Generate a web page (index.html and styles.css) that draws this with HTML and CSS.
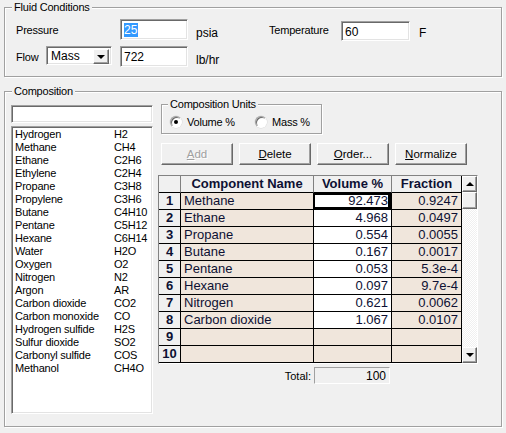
FILE: index.html
```html
<!DOCTYPE html>
<html lang="en">
  <head>
    <meta charset="UTF-8" />
    <title>Fluid Conditions</title>
    <link rel="stylesheet" href="styles.css">
  </head>
  <body>
    <fieldset class="group fluid">
      <legend>Fluid Conditions</legend>
      <div class="row">
        <span class="lbl w-pressure">Pressure</span>
        <div class="field pressure"><span class="selected">25</span></div>
        <span class="unit w-psia">psia</span>
        <span class="lbl w-temp">Temperature</span>
        <div class="field temp">60</div>
        <span class="unit f-unit">F</span>
      </div>
      <div class="row row2">
        <span class="lbl w-flow">Flow</span>
        <div class="combo">
          <span class="combo-text">Mass</span>
          <span class="combo-btn"><i class="arrow-down"></i></span>
        </div>
        <div class="field flow">722</div>
        <span class="unit">lb/hr</span>
      </div>
    </fieldset>

    <fieldset class="group comp">
      <legend>Composition</legend>
      <div class="comp-body">
        <div class="left">
          <div class="field search"></div>
          <ul class="list">
            <li><span>Hydrogen</span>H2</li>
            <li><span>Methane</span>CH4</li>
            <li><span>Ethane</span>C2H6</li>
            <li><span>Ethylene</span>C2H4</li>
            <li><span>Propane</span>C3H8</li>
            <li><span>Propylene</span>C3H6</li>
            <li><span>Butane</span>C4H10</li>
            <li><span>Pentane</span>C5H12</li>
            <li><span>Hexane</span>C6H14</li>
            <li><span>Water</span>H2O</li>
            <li><span>Oxygen</span>O2</li>
            <li><span>Nitrogen</span>N2</li>
            <li><span>Argon</span>AR</li>
            <li><span>Carbon dioxide</span>CO2</li>
            <li><span>Carbon monoxide</span>CO</li>
            <li><span>Hydrogen sulfide</span>H2S</li>
            <li><span>Sulfur dioxide</span>SO2</li>
            <li><span>Carbonyl sulfide</span>COS</li>
            <li><span>Methanol</span>CH4O</li>
          </ul>
        </div>

        <div class="right">
          <fieldset class="units">
            <legend>Composition Units</legend>
            <div class="radios">
              <label class="radio first"><span class="dot on"></span>Volume %</label>
              <label class="radio"><span class="dot"></span>Mass %</label>
            </div>
          </fieldset>

          <div class="buttons">
            <button class="btn" disabled><u>A</u>dd</button>
            <button class="btn"><u>D</u>elete</button>
            <button class="btn"><u>O</u>rder...</button>
            <button class="btn"><u>N</u>ormalize</button>
          </div>

          <div class="grid">
            <table>
              <tr>
                <th class="c-num"></th>
                <th class="c-name">Component Name</th>
                <th class="c-vol">Volume %</th>
                <th class="c-frac">Fraction</th>
              </tr>
              <tr><td class="num">1</td><td class="name">Methane</td><td class="vol current">92.473</td><td class="frac">0.9247</td></tr>
              <tr><td class="num">2</td><td class="name">Ethane</td><td class="vol">4.968</td><td class="frac">0.0497</td></tr>
              <tr><td class="num">3</td><td class="name">Propane</td><td class="vol">0.554</td><td class="frac">0.0055</td></tr>
              <tr><td class="num">4</td><td class="name">Butane</td><td class="vol">0.167</td><td class="frac">0.0017</td></tr>
              <tr><td class="num">5</td><td class="name">Pentane</td><td class="vol">0.053</td><td class="frac">5.3e-4</td></tr>
              <tr><td class="num">6</td><td class="name">Hexane</td><td class="vol">0.097</td><td class="frac">9.7e-4</td></tr>
              <tr><td class="num">7</td><td class="name">Nitrogen</td><td class="vol">0.621</td><td class="frac">0.0062</td></tr>
              <tr><td class="num">8</td><td class="name">Carbon dioxide</td><td class="vol">1.067</td><td class="frac">0.0107</td></tr>
              <tr><td class="num">9</td><td class="name"></td><td class="vol empty"></td><td class="frac"></td></tr>
              <tr><td class="num">10</td><td class="name"></td><td class="vol empty"></td><td class="frac"></td></tr>
            </table>
            <div class="scroll">
              <div class="sb-btn"><i class="arrow-up"></i></div>
              <div class="sb-thumb"></div>
              <div class="sb-track"></div>
              <div class="sb-btn"><i class="arrow-down"></i></div>
            </div>
          </div>

          <div class="total">
            <span class="total-label">Total:</span>
            <div class="total-box">100</div>
          </div>
        </div>
      </div>
    </fieldset>
  </body>
</html>
```

FILE: styles.css
```css
* {
  margin: 0;
  padding: 0;
  box-sizing: border-box;
}
body {
  width: 506px;
  height: 433px;
  background-color: #f0f0f0;
  font-family: "Liberation Sans", Arial, sans-serif;
  font-size: 11px;
  letter-spacing: -0.2px;
  color: #000;
  overflow: hidden;
}

/* group boxes */
.group {
  width: 498px;
  margin-left: 4px;
  border: 1px solid #a0a0a0;
  box-shadow: inset 1px 1px 0 #fff, 1px 1px 0 #fff;
}
.group legend,
.units legend {
  padding: 0 2px;
  line-height: 13px;
  background-color: #f0f0f0;
}
.fluid {
  margin-top: 1px;
  padding: 5px 0 9px 11px;
}
.fluid legend {
  margin-left: -4px;
}
.comp {
  margin-top: 8px;
  padding: 0 0 12px 6px;
}
.comp legend {
  margin-left: 1px;
}

/* fluid conditions rows */
.row {
  display: flex;
  align-items: center;
  height: 21px;
}
.row2 {
  margin-top: 6px;
}
.lbl {
  white-space: nowrap;
}
.w-pressure { width: 104px; }
.w-temp { width: 72px; }
.w-flow { width: 30px; }
.unit {
  font-size: 12px;
  letter-spacing: 0;
  margin-left: 8px;
  margin-top: 6px;
}
.w-psia { width: 73px; }
.f-unit { margin-left: 9px; }

.field {
  background-color: #fff;
  border: 1px solid;
  border-color: #a0a0a0 #fff #fff #a0a0a0;
  box-shadow: inset 1px 1px 0 #696969, inset -1px -1px 0 #e3e3e3;
  font-size: 12px;
  letter-spacing: 0;
  padding: 3px 0 0 3px;
  line-height: 14px;
}
.pressure { width: 68px; height: 21px; }
.temp { width: 69px; height: 20px; margin-top: 2px; }
.flow { width: 68px; height: 21px; margin-left: 8px; }
.selected {
  background-color: #3399ff;
  color: #fff;
  padding: 0 1px 0 0;
}

/* dropdown */
.combo {
  display: flex;
  width: 66px;
  height: 19px;
  background-color: #fff;
  border: 1px solid;
  border-color: #a0a0a0 #fff #fff #a0a0a0;
  box-shadow: inset 1px 1px 0 #696969, inset -1px -1px 0 #e3e3e3;
  padding: 2px 2px 2px 2px;
  margin-top: -2px;
}
.combo-text {
  flex: 1;
  font-size: 12px;
  letter-spacing: 0;
  padding-left: 2px;
  line-height: 14px;
}
.combo-btn {
  width: 16px;
  height: 15px;
  display: flex;
  align-items: center;
  justify-content: center;
  background-color: #f0f0f0;
  border: 1px solid;
  border-color: #fff #696969 #696969 #fff;
  box-shadow: inset -1px -1px 0 #a0a0a0;
}
.arrow-down,
.arrow-up {
  display: block;
  width: 0;
  height: 0;
  border-left: 4px solid transparent;
  border-right: 4px solid transparent;
}
.arrow-down { border-top: 4px solid #000; }
.arrow-up { border-bottom: 4px solid #000; }

/* composition */
.comp-body {
  display: flex;
  align-items: flex-start;
}
.left {
  width: 142px;
  margin-top: 7px;
}
.search {
  height: 18px;
}
.list {
  list-style: none;
  margin-top: 3px;
  height: 288px;
  background-color: #fff;
  border: 1px solid;
  border-color: #a0a0a0 #fff #fff #a0a0a0;
  box-shadow: inset 1px 1px 0 #696969, inset -1px -1px 0 #e3e3e3;
  padding: 1px 0 0 3px;
  line-height: 13px;
}
.list li {
  display: flex;
  white-space: nowrap;
}
.list li span {
  width: 99px;
}

.right {
  width: 320px;
  margin-left: 5px;
}
.units {
  width: 161px;
  margin-left: 3px;
  border: 1px solid #a0a0a0;
  box-shadow: inset 1px 1px 0 #fff, 1px 1px 0 #fff;
  padding: 0 4px 4px 4px;
}
.units legend {
  margin-left: 2px;
}
.radios {
  display: flex;
  align-items: center;
  height: 14px;
  margin-top: 4px;
}
.radio {
  display: flex;
  align-items: center;
  gap: 5px;
}
.radio.first {
  width: 85px;
  margin-left: 4px;
}
.dot {
  width: 12px;
  height: 12px;
  border-radius: 50%;
  background-color: #fff;
  border: 1px solid;
  border-color: #a0a0a0 #fff #fff #a0a0a0;
  box-shadow: inset 1px 1px 0 #696969, 0 0 0 0.5px #d8d8d8;
  display: flex;
  align-items: center;
  justify-content: center;
}
.dot.on::after {
  content: "";
  width: 4px;
  height: 4px;
  border-radius: 50%;
  background-color: #000;
}

.buttons {
  display: flex;
  gap: 6px;
  margin: 9px 0 0 3px;
}
.btn {
  width: 72px;
  height: 22px;
  font-family: inherit;
  font-size: 11.5px;
  letter-spacing: 0;
  color: #000;
  background-color: #f0f0f0;
  border: 1px solid;
  border-color: #fff #696969 #696969 #fff;
  box-shadow: inset -1px -1px 0 #a0a0a0;
}
.btn:disabled {
  color: #a0a0a0;
  text-shadow: 1px 1px 0 #fff;
}

/* grid */
.grid {
  display: flex;
  margin-top: 10px;
  height: 189px;
  border: 1px solid;
  border-color: #828282 #fff #fff #828282;
  overflow: hidden;
  background-color: #f0f0f0;
}
.grid table {
  width: 303px;
  table-layout: fixed;
  border-collapse: separate;
  border-spacing: 0;
  font-size: 13px;
  letter-spacing: 0;
  color: #0d1033;
}
.grid th,
.grid td {
  height: 17px;
  padding: 0 3px;
  border-right: 1px solid #000;
  border-bottom: 1px solid #000;
  line-height: 16px;
  white-space: nowrap;
  overflow: hidden;
}
.grid th {
  font-weight: bold;
  background-color: #f0f0f0;
  border-right-color: #808080;
}
.grid th.c-frac { border-right-color: #000; }
.c-num { width: 22px; }
.c-name { width: 133px; }
.c-vol { width: 78px; }
.c-frac { width: 70px; }
.num {
  font-weight: bold;
  text-align: center;
  background-color: #f0f0f0;
  padding: 0 !important;
}
.name {
  background-color: #f0e6dc;
}
.vol {
  background-color: #fff;
  text-align: right;
}
.vol.empty {
  background-color: #f0e6dc;
}
.vol.current {
  box-shadow: inset 0 0 0 1px #000, inset -1px 0 0 2px #000;
}
.frac {
  background-color: #f0e6dc;
  text-align: right;
}

.scroll {
  width: 15px;
  display: flex;
  flex-direction: column;
  height: 187px;
}
.sb-btn,
.sb-thumb {
  height: 16px;
  display: flex;
  align-items: center;
  justify-content: center;
  background-color: #f0f0f0;
  border: 1px solid;
  border-color: #fff #696969 #696969 #fff;
  box-shadow: inset -1px -1px 0 #a0a0a0;
}
.sb-thumb {
  height: 17px;
}
.sb-track {
  flex: 1;
  background-image: repeating-conic-gradient(#fff 0 25%, #f0f0f0 0 50%);
  background-size: 2px 2px;
}

.total {
  display: flex;
  align-items: center;
  margin-top: 3px;
}
.total-label {
  width: 153px;
  text-align: right;
  letter-spacing: 0;
}
.total-box {
  width: 76px;
  height: 17px;
  margin-left: 3px;
  border: 1px solid;
  border-color: #a0a0a0 #fff #fff #a0a0a0;
  text-align: right;
  padding: 1px 3px 0 0;
  font-size: 12px;
  letter-spacing: 0;
}
```
